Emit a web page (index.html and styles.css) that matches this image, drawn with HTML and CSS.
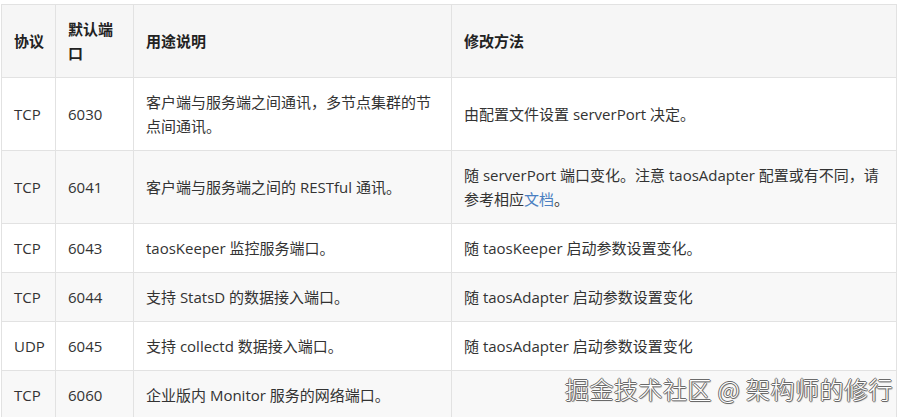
FILE: index.html
```html
<!DOCTYPE html>
<html lang="zh-CN">
<head>
<meta charset="utf-8">
<title>端口</title>
<link rel="stylesheet" href="styles.css">
</head>
<body>
<div class="page">
  <table class="ports">
    <colgroup>
      <col class="c-proto">
      <col class="c-port">
      <col class="c-use">
      <col class="c-how">
    </colgroup>
    <thead>
      <tr>
        <th class="first">协议</th>
        <th>默认端口</th>
        <th>用途说明</th>
        <th>修改方法</th>
      </tr>
    </thead>
    <tbody>
      <tr>
        <td class="first">TCP</td>
        <td>6030</td>
        <td>客户端与服务端之间通讯，多节点集群的节点间通讯。</td>
        <td>由配置文件设置 serverPort 决定。</td>
      </tr>
      <tr>
        <td class="first">TCP</td>
        <td>6041</td>
        <td>客户端与服务端之间的 RESTful 通讯。</td>
        <td>随 serverPort 端口变化。注意 taosAdapter 配置或有不同，请参考相应<a class="link" href="#">文档</a>。</td>
      </tr>
      <tr>
        <td class="first">TCP</td>
        <td>6043</td>
        <td>taosKeeper 监控服务端口。</td>
        <td>随 taosKeeper 启动参数设置变化。</td>
      </tr>
      <tr>
        <td class="first">TCP</td>
        <td>6044</td>
        <td>支持 StatsD 的数据接入端口。</td>
        <td>随 taosAdapter 启动参数设置变化</td>
      </tr>
      <tr>
        <td class="first">UDP</td>
        <td>6045</td>
        <td>支持 collectd 数据接入端口。</td>
        <td>随 taosAdapter 启动参数设置变化</td>
      </tr>
      <tr>
        <td class="first">TCP</td>
        <td>6060</td>
        <td>企业版内 Monitor 服务的网络端口。</td>
        <td></td>
      </tr>
    </tbody>
  </table>
  <div class="watermark">掘金技术社区 @ 架构师的修行</div>
</div>
</body>
</html>
```

FILE: styles.css
```css
html, body {
  margin: 0;
  padding: 0;
  background: #ffffff;
}

.page {
  position: relative;
  width: 908px;
  height: 417px;
  overflow: hidden;
  padding: 4px 0 0 1px;
  box-sizing: border-box;
  font-family: "Open Sans", "Noto Sans CJK SC", sans-serif;
  color: #333333;
}

.ports {
  border-collapse: collapse;
  table-layout: fixed;
  width: 895px;
  font-size: 15px;
  line-height: 24px;
}

.c-proto { width: 54px; }
.c-port { width: 78px; }
.c-use { width: 318px; }
.c-how { width: 445px; }

.ports th,
.ports td {
  border: 1px solid #e2e2e2;
  padding: 12px 12px;
  text-align: left;
  vertical-align: middle;
  word-break: break-all;
}

.ports .first {
  padding-left: 12px;
  padding-right: 2px;
  white-space: nowrap;
}

.ports th {
  font-weight: 700;
  background: #f6f6f6;
  color: #222222;
}

.ports tbody tr:nth-child(even) td {
  background: #f8f8f8;
}

.ports td {
  height: 24px;
}

.link {
  color: #4a7fc1;
  text-decoration: none;
}

.watermark {
  position: absolute;
  right: 15px;
  bottom: 14px;
  font-family: "Noto Sans CJK SC", sans-serif;
  font-size: 24px;
  line-height: 28px;
  font-weight: 300;
  color: #ffffff;
  letter-spacing: 0.5px;
  text-shadow:
    1px 0 0 #6a6a6a,
    -1px 0 0 #6a6a6a,
    0 1px 0 #6a6a6a,
    0 -1px 0 #6a6a6a,
    1px 1px 1px rgba(0,0,0,0.4);
}
```
